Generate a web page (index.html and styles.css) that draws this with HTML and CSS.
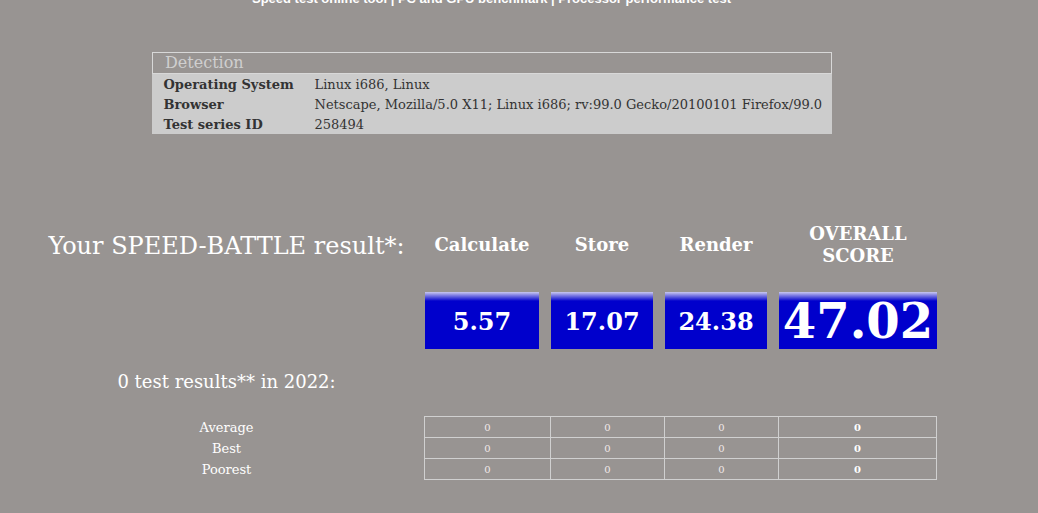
FILE: index.html
```html
<!DOCTYPE html>
<html>
<head>
    <meta charset="UTF-8">
    <title>SPEED-BATTLE result</title>
    <link rel="stylesheet" href="styles.css">
</head>
<body>
    <div class="topnav">Speed test online tool | PC and GPU benchmark | Processor performance test</div>

    <table class="detection">
        <tr><th colspan="2">Detection</th></tr>
        <tr><td class="key">Operating System</td><td>Linux i686, Linux</td></tr>
        <tr><td class="key">Browser</td><td>Netscape, Mozilla/5.0 X11; Linux i686; rv:99.0 Gecko/20100101 Firefox/99.0</td></tr>
        <tr><td class="key">Test series ID</td><td>258494</td></tr>
    </table>

    <div class="result">
        <div class="result-title">Your SPEED-BATTLE result*:</div>
        <div class="col-head">Calculate</div>
        <div class="col-head">Store</div>
        <div class="col-head">Render</div>
        <div class="col-head last">OVERALL<br>SCORE</div>

        <div></div>
        <div class="score">5.57</div>
        <div class="score">17.07</div>
        <div class="score">24.38</div>
        <div class="score overall">47.02</div>

        <div class="year-title">0 test results** in 2022:</div>

        <div class="stat-labels">
            <div>Average</div>
            <div>Best</div>
            <div>Poorest</div>
        </div>
        <table class="stats">
            <tr><td class="c1">0</td><td class="c2">0</td><td class="c3">0</td><td class="c4">0</td></tr>
            <tr><td class="c1">0</td><td class="c2">0</td><td class="c3">0</td><td class="c4">0</td></tr>
            <tr><td class="c1">0</td><td class="c2">0</td><td class="c3">0</td><td class="c4">0</td></tr>
        </table>
    </div>
</body>
</html>
```

FILE: styles.css
```css
body {
    margin: 0;
    background-color: #989492;
    color: #fff;
    font-family: "DejaVu Serif", serif;
    overflow: hidden;
}
.topnav {
    margin-top: -9px;
    text-align: center;
    padding-right: 55px;
    font-family: "Liberation Sans", Arial, sans-serif;
    font-weight: bold;
    font-size: 13px;
    line-height: 16px;
}

/* detection box */
.detection {
    margin: 45px 0 0 152px;
    width: 680px;
    border-collapse: collapse;
    background-color: #cccccc;
    color: #333;
    font-size: 13px;
}
.detection th {
    background-color: #989492;
    border: 1px solid #d8d8d8;
    color: #cfcfcf;
    font-weight: normal;
    font-size: 16px;
    text-align: left;
    padding: 0 12px;
    height: 20px;
    line-height: 20px;
}
.detection td {
    height: 20px;
    padding: 0 0 0 11px;
    white-space: nowrap;
}
.detection .key {
    font-weight: bold;
    width: 140px;
}

/* result grid */
.result {
    display: grid;
    grid-template-columns: 397px 126px 114px 114px 158px;
    margin: 89px 0 0 28px;
}
.result-title {
    font-size: 24px;
    text-align: center;
    align-self: center;
    padding-top: 1px;
}
.col-head {
    font-weight: bold;
    font-size: 18px;
    line-height: 22px;
    text-align: center;
    align-self: center;
    padding-right: 12px;
}
.col-head.last {
    padding-right: 0;
}
.score {
    margin-top: 25px;
    height: 57px;
    margin-right: 12px;
    background: linear-gradient(#c9c8f0 0, #0000cc 9px, #0000cc 100%);
    font-weight: bold;
    font-size: 24px;
    display: flex;
    align-items: center;
    justify-content: center;
    padding-top: 1px;
    box-sizing: border-box;
}
.score.overall {
    margin-right: 0;
    font-size: 48px;
    padding-top: 0;
}
.year-title {
    grid-column: 1;
    text-align: center;
    font-size: 18px;
    margin: 22px 0 24px 0;
}
.stat-labels {
    grid-column: 1;
    text-align: center;
    font-size: 13px;
    line-height: 21px;
    padding: 1px 0 0 0;
}
.stats {
    grid-column: 2 / 6;
    border-collapse: collapse;
    margin-left: -1px;
    font-size: 10px;
    color: #f0e8e8;
    text-align: center;
}
.stats td {
    border: 1px solid #d0d0d0;
    height: 20px;
    padding: 0;
}
.stats .c1 { width: 125px; }
.stats .c2 { width: 113px; }
.stats .c3 { width: 113px; }
.stats .c4 { font-weight: bold; color: #fff; }
```
